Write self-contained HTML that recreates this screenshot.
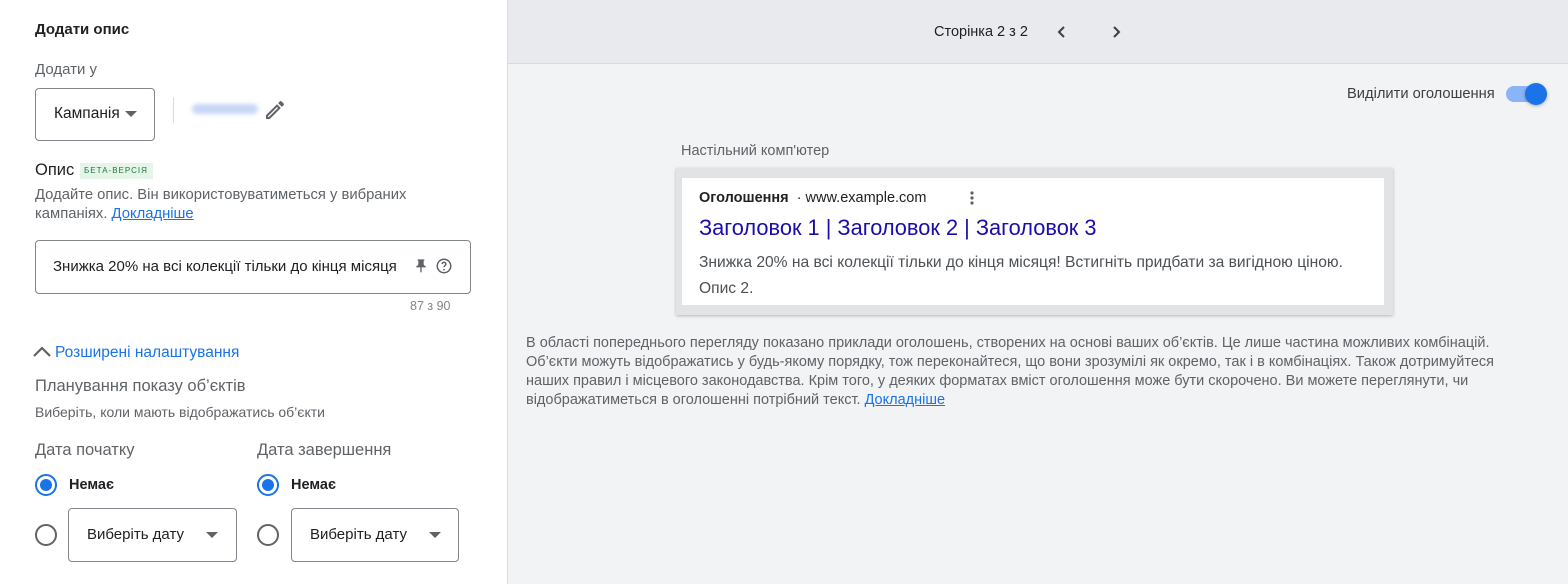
<!DOCTYPE html><html><head><meta charset="utf-8"><style>
*{margin:0;padding:0;box-sizing:border-box}
body{width:1568px;height:584px;overflow:hidden;font-family:"Liberation Sans",Arial,sans-serif;background:#fff;position:relative}
.a{position:absolute;white-space:nowrap;line-height:1}
.box{position:absolute;border:1px solid #80868b;border-radius:4px}
.tri{position:absolute;width:0;height:0;border-left:6px solid transparent;border-right:6px solid transparent;border-top:6px solid #5f6368}
.rad{position:absolute;width:22px;height:22px;border-radius:50%;border:2px solid #5f6368}
.rad.on{border-color:#1a73e8}
.rad.on::after{content:"";position:absolute;left:3px;top:3px;width:12px;height:12px;border-radius:50%;background:#1a73e8}
</style></head><body>
<div class="a" style="left:35px;top:22px;font-size:15px;font-weight:bold;color:#202124">Додати опис</div>
<div class="a" style="left:35px;top:62px;font-size:15px;color:#5f6368">Додати у</div>
<div class="box" style="left:35px;top:88px;width:120px;height:53px"></div>
<div class="a" style="left:54px;top:106px;font-size:15.5px;color:#202124">Кампанія</div>
<div class="tri" style="left:125px;top:111px"></div>
<div style="position:absolute;left:173px;top:97px;width:1px;height:26px;background:#dadce0"></div>
<div style="position:absolute;left:192px;top:104px;width:66px;height:10px;background:#c6d6f5;border-radius:5px;filter:blur(2px)"></div>
<svg style="position:absolute;left:263px;top:98px" width="24" height="24" viewBox="0 0 24 24"><path d="M3 17.25V21h3.75L17.8 9.94l-3.75-3.75L3 17.25zM5.92 19H5v-.92l9.06-9.06.92.92L5.92 19zM20.7 7.04a1 1 0 000-1.41l-2.34-2.34a1 1 0 00-1.41 0l-1.83 1.83 3.75 3.75 1.83-1.83z" fill="#5f6368"/></svg>
<div class="a" style="left:35px;top:162px;font-size:16.5px;color:#202124">Опис</div>
<div class="a" style="left:80px;top:163px;width:73px;height:16px;background:#e6f4ea;color:#188038;font-size:8px;letter-spacing:1px;padding-top:4px;padding-left:4px">БЕТА-ВЕРСІЯ</div>
<div class="a" style="left:35px;top:186px;font-size:14.8px;color:#5f6368;line-height:19px">Додайте опис. Він використовуватиметься у вибраних<br>кампаніях. <span style="color:#1a73e8;text-decoration:underline">Докладніше</span></div>
<div class="box" style="left:35px;top:240px;width:436px;height:54px"></div>
<div class="a" style="left:53px;top:259px;font-size:15px;color:#202124">Знижка 20% на всі колекції тільки до кінця місяця</div>
<svg style="position:absolute;left:413px;top:258px" width="16" height="16" viewBox="0 0 24 24"><path d="M16 9V4h1V2H7v2h1v5c0 1.66-1.34 3-3 3v2h5.97v7l1 1 1-1v-7H19v-2c-1.66 0-3-1.34-3-3z" fill="#5f6368"/></svg>
<svg style="position:absolute;left:435px;top:257px" width="18" height="18" viewBox="0 0 24 24"><circle cx="12" cy="12" r="9" fill="none" stroke="#5f6368" stroke-width="2"/><path d="M9.5 9.5a2.5 2.5 0 115 0c0 1.8-2.5 2-2.5 4" fill="none" stroke="#5f6368" stroke-width="2"/><circle cx="12" cy="17" r="1.2" fill="#5f6368"/></svg>
<div class="a" style="left:410px;top:300px;font-size:12.5px;color:#80868b">87 з 90</div>
<svg style="position:absolute;left:32px;top:345px" width="20" height="14" viewBox="0 0 20 14"><path d="M2 11L10 3l8 8" fill="none" stroke="#5f6368" stroke-width="2.2"/></svg>
<div class="a" style="left:55px;top:345px;font-size:15.5px;color:#1a73e8">Розширені налаштування</div>
<div class="a" style="left:35px;top:378px;font-size:16.5px;color:#5f6368">Планування показу об’єктів</div>
<div class="a" style="left:35px;top:405px;font-size:14px;color:#5f6368">Виберіть, коли мають відображатись об’єкти</div>
<div class="a" style="left:35px;top:442px;font-size:16.5px;color:#5f6368">Дата початку</div>
<div class="a" style="left:257px;top:442px;font-size:16.5px;color:#5f6368">Дата завершення</div>
<div class="rad on" style="left:35px;top:474px"></div>
<div class="rad on" style="left:257px;top:474px"></div>
<div class="a" style="left:69px;top:478px;font-size:14.5px;font-weight:bold;color:#202124">Немає</div>
<div class="a" style="left:291px;top:478px;font-size:14.5px;font-weight:bold;color:#202124">Немає</div>
<div class="rad" style="left:35px;top:524px"></div>
<div class="rad" style="left:257px;top:524px"></div>
<div class="box" style="left:68px;top:508px;width:169px;height:54px"></div>
<div class="box" style="left:291px;top:508px;width:168px;height:54px"></div>
<div class="a" style="left:87px;top:527px;font-size:15px;color:#202124">Виберіть дату</div>
<div class="a" style="left:310px;top:527px;font-size:15px;color:#202124">Виберіть дату</div>
<div class="tri" style="left:206px;top:532px"></div>
<div class="tri" style="left:429px;top:532px"></div>

<div style="position:absolute;left:507px;top:0;width:1061px;height:584px;background:#f1f3f4;border-left:1px solid #dadce0"></div>
<div style="position:absolute;left:508px;top:0;width:1060px;height:64px;background:#e8eaed;border-bottom:1px solid #d8dadd"></div>
<div class="a" style="left:934px;top:25px;font-size:14.5px;color:#202124">Сторінка 2 з 2</div>
<svg style="position:absolute;left:1054px;top:24px" width="16" height="16" viewBox="0 0 16 16"><path d="M10 3L5 8l5 5" fill="none" stroke="#3c4043" stroke-width="2"/></svg>
<svg style="position:absolute;left:1108px;top:24px" width="16" height="16" viewBox="0 0 16 16"><path d="M6 3l5 5-5 5" fill="none" stroke="#3c4043" stroke-width="2"/></svg>
<div class="a" style="left:1347px;top:87px;font-size:14.7px;color:#3c4043">Виділити оголошення</div>
<div style="position:absolute;left:1506px;top:86px;width:34px;height:16px;border-radius:8px;background:#8ab4f8"></div>
<div style="position:absolute;left:1525px;top:83px;width:22px;height:22px;border-radius:50%;background:#1a73e8;box-shadow:0 1px 3px rgba(0,0,0,.3)"></div>
<div class="a" style="left:681px;top:144px;font-size:14.5px;color:#5f6368">Настільний комп'ютер</div>
<div style="position:absolute;left:676px;top:168px;width:717px;height:147px;background:#e2e3e5;box-shadow:0 1px 3px rgba(0,0,0,.25)"></div>
<div style="position:absolute;left:682px;top:178px;width:702px;height:127px;background:#fff"></div>
<div class="a" style="left:699px;top:191px;font-size:14.5px;color:#202124"><b>Оголошення</b> &nbsp;· www.example.com</div>
<svg style="position:absolute;left:968px;top:190px" width="8" height="16" viewBox="0 0 8 16"><circle cx="4" cy="3" r="1.6" fill="#5f6368"/><circle cx="4" cy="8" r="1.6" fill="#5f6368"/><circle cx="4" cy="13" r="1.6" fill="#5f6368"/></svg>
<div class="a" style="left:699px;top:217px;font-size:21.8px;color:#1a0dab">Заголовок 1 | Заголовок 2 | Заголовок 3</div>
<div class="a" style="left:699px;top:250px;font-size:15.6px;color:#4d5156;line-height:26px">Знижка 20% на всі колекції тільки до кінця місяця! Встигніть придбати за вигідною ціною.<br>Опис 2.</div>
<div class="a" style="left:526px;top:334px;font-size:14.5px;color:#5f6368;line-height:19px">В області попереднього перегляду показано приклади оголошень, створених на основі ваших об’єктів. Це лише частина можливих комбінацій.<br>Об’єкти можуть відображатись у будь-якому порядку, тож переконайтеся, що вони зрозумілі як окремо, так і в комбінаціях. Також дотримуйтеся<br>наших правил і місцевого законодавства. Крім того, у деяких форматах вміст оголошення може бути скорочено. Ви можете переглянути, чи<br>відображатиметься в оголошенні потрібний текст. <span style="color:#1a73e8;text-decoration:underline">Докладніше</span></div>
</body></html>
